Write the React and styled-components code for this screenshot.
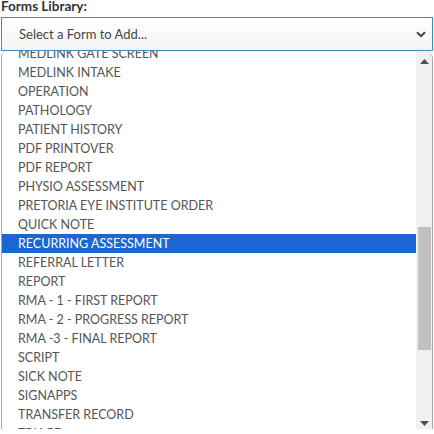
import styled, { createGlobalStyle } from "styled-components";

const FORMS = [
  "MEDLINK GATE SCREEN",
  "MEDLINK INTAKE",
  "OPERATION",
  "PATHOLOGY",
  "PATIENT HISTORY",
  "PDF PRINTOVER",
  "PDF REPORT",
  "PHYSIO ASSESSMENT",
  "PRETORIA EYE INSTITUTE ORDER",
  "QUICK NOTE",
  "RECURRING ASSESSMENT",
  "REFERRAL LETTER",
  "REPORT",
  "RMA - 1 - FIRST REPORT",
  "RMA - 2 - PROGRESS REPORT",
  "RMA -3 - FINAL REPORT",
  "SCRIPT",
  "SICK NOTE",
  "SIGNAPPS",
  "TRANSFER RECORD",
  "TRIAGE",
  "VITALS",
];

const selected = "RECURRING ASSESSMENT";

const GlobalStyle = createGlobalStyle`
  html, body {
    margin: 0;
    padding: 0;
    background: #fff;
    overflow: hidden;
  }
  body {
    font-family: Lato, "Liberation Sans", sans-serif;
  }
`;

const App = () => {
  return (
    <>
      <GlobalStyle />
      <Page>
        <Label>Forms Library:</Label>
        <Select>
          <SelectText>Select a Form to Add...</SelectText>
          <Chevron width="10" height="7" viewBox="0 0 10 7">
            <path d="M1 1.2 L5 5.2 L9 1.2" fill="none" stroke="#444" strokeWidth="2" />
          </Chevron>
        </Select>
        <ListBox>
          <Items>
            <ItemsInner>
              {FORMS.map(f => (
                <Item key={f} $active={f === selected}>
                  {f}
                </Item>
              ))}
            </ItemsInner>
          </Items>
          <Scrollbar>
            <Arrow width="9" height="5" viewBox="0 0 9 5">
              <path d="M0 5 L4.5 0 L9 5 Z" fill="#505050" />
            </Arrow>
            <Track>
              <Thumb />
            </Track>
            <Arrow width="9" height="5" viewBox="0 0 9 5">
              <path d="M0 0 L4.5 5 L9 0 Z" fill="#505050" />
            </Arrow>
          </Scrollbar>
        </ListBox>
      </Page>
    </>
  );
};

const Page = styled.div`
  display: flex;
  flex-direction: column;
  width: 434px;
  height: 434px;
  overflow: hidden;
  margin-top: -5px;
`;

const Label = styled.div`
  font-size: 13.5px;
  font-weight: 700;
  color: #333;
  line-height: 22px;
  padding-left: 1px;
`;

const Select = styled.div`
  display: flex;
  align-items: center;
  justify-content: space-between;
  margin-left: 1px;
  width: 432px;
  height: 34px;
  box-sizing: border-box;
  border: 1px solid #3a8cc4;
  background: linear-gradient(#ffffff, #f4f4f4);
  padding: 0 4px 0 17px;
  flex-shrink: 0;
`;

const SelectText = styled.span`
  font-size: 13px;
  color: #444;
`;

const Chevron = styled.svg`
  margin-right: 2px;
`;

const ListBox = styled.div`
  display: flex;
  margin-left: 1px;
  width: 432px;
  height: 382px;
  box-sizing: border-box;
  border: 1px solid #a8a8a8;
  border-top: 0;
  border-radius: 6px;
  border-top-right-radius: 8px;
  overflow: hidden;
  flex-shrink: 0;
  background: #fff;
`;

const Items = styled.div`
  flex: 1;
  overflow: hidden;
`;

const ItemsInner = styled.div`
  display: flex;
  flex-direction: column;
  margin-top: -7px;
`;

const Item = styled.div`
  height: 19px;
  line-height: 19px;
  padding-left: 16px;
  font-size: 12.5px;
  white-space: nowrap;
  color: ${p => (p.$active ? "#fff" : "#555")};
  background: ${p => (p.$active ? "#1a66d2" : "transparent")};
`;

const Scrollbar = styled.div`
  display: flex;
  flex-direction: column;
  align-items: center;
  width: 16px;
  background: #f0f0f0;
  padding: 8px 0 6px;
  box-sizing: border-box;
  gap: 6px;
`;

const Arrow = styled.svg`
  flex-shrink: 0;
`;

const Track = styled.div`
  flex: 1;
  width: 100%;
  display: flex;
  flex-direction: column;
  align-items: center;
  padding-top: 157px;
  box-sizing: border-box;
`;

const Thumb = styled.div`
  width: 13px;
  height: 123px;
  background: #c1c1c1;
`;

export default App;
